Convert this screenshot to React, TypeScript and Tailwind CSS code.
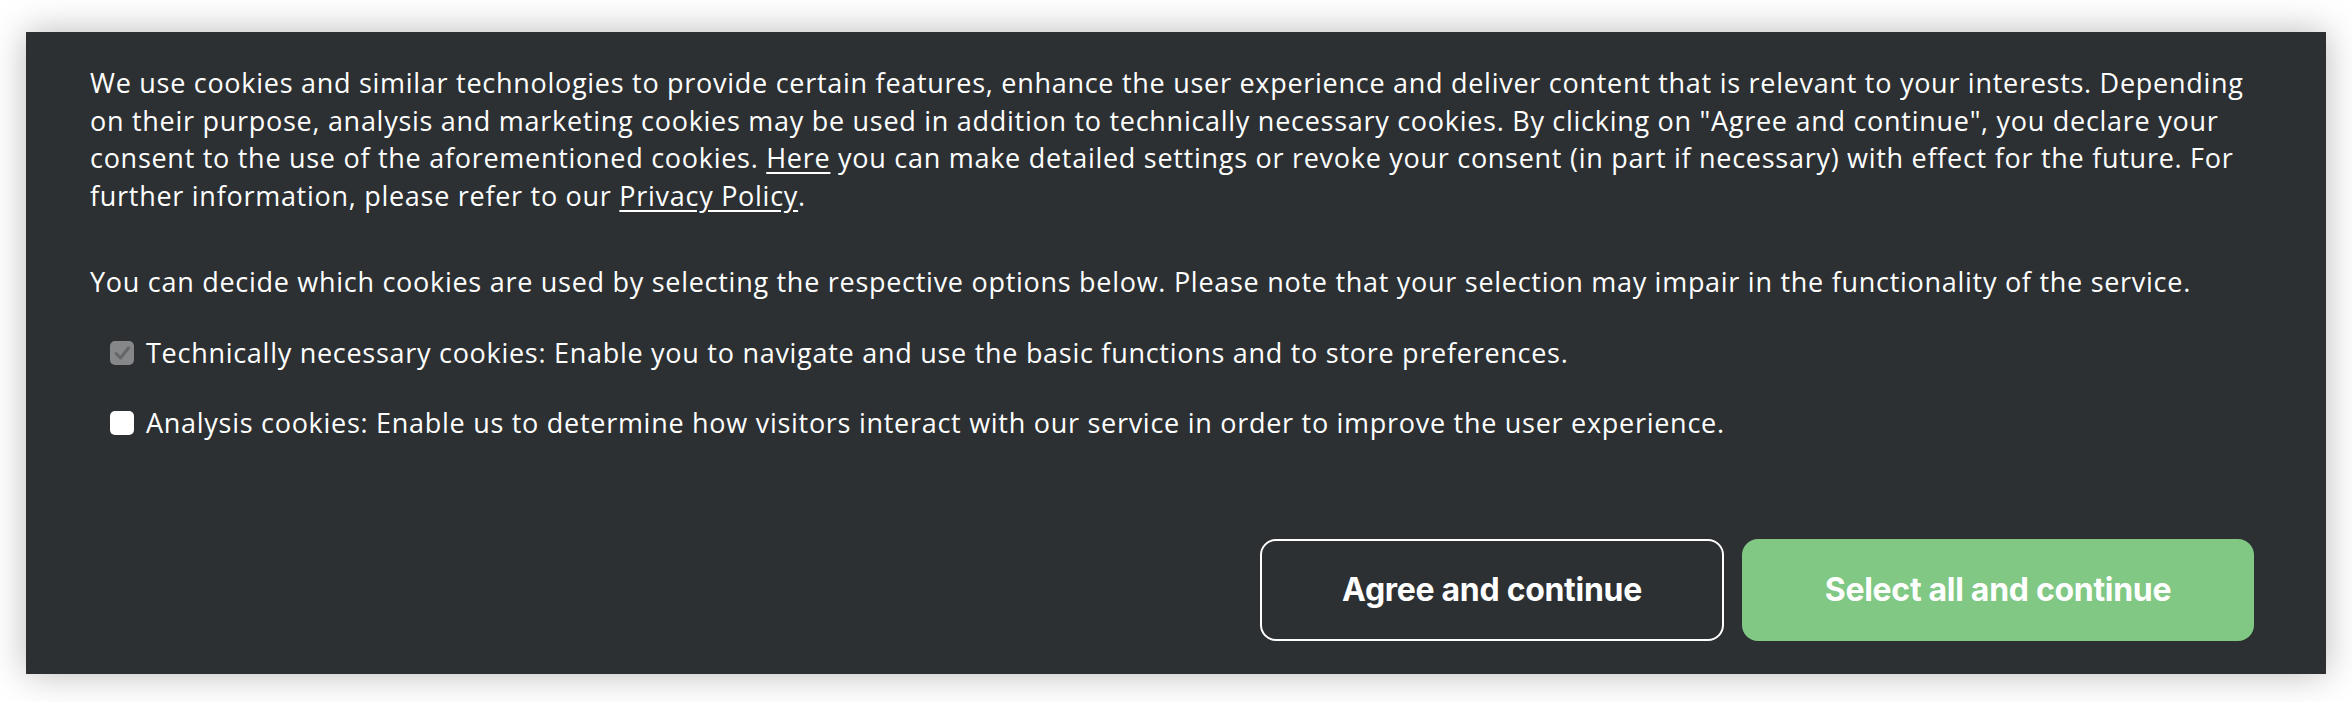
import React from 'react';

const App: React.FC = () => {
  return (
    <div className="h-[702px] w-[2352px] bg-white px-[26px] pt-[32px] pb-[28px]">
      <div
        className="flex h-[642px] flex-col bg-[#2c3033] pl-[64px] pr-[72px] pt-[32px] pb-[33px] text-white shadow-[0_0_34px_rgba(0,0,0,0.28)]"
        style={{ fontFamily: '"Open Sans", "Noto Sans", sans-serif' }}
      >
        {/* Intro text */}
        <p className="text-[27px] leading-[37.5px] tracking-[0.72px]">
          We use cookies and similar technologies to provide certain features, enhance the user experience and deliver content that is relevant to your interests. Depending on their purpose, analysis and marketing cookies may be used in addition to technically necessary cookies. By clicking on "Agree and continue", you declare your consent to the use of the aforementioned cookies.{' '}
          <a className="underline underline-offset-4">Here</a> you can make detailed settings or revoke your consent (in part if necessary) with effect for the future. For further information, please refer to our{' '}
          <a className="underline underline-offset-4">Privacy Policy</a>.
        </p>
        <p className="mt-[49px] text-[27px] leading-[37.5px] tracking-[0.72px]">
          You can decide which cookies are used by selecting the respective options below. Please note that your selection may impair in the functionality of the service.
        </p>

        {/* Options */}
        <div className="mt-[32px] flex flex-col gap-[30px] pl-[20px]">
          <label className="flex items-center gap-[12px] text-[27px] leading-[40px] tracking-[0.72px]">
            <span className="flex h-[24px] w-[24px] shrink-0 items-center justify-center rounded-[5px] bg-[#858789]">
              <svg viewBox="0 0 24 24" className="h-[24px] w-[24px]" fill="none" stroke="#646668" strokeWidth="3" strokeLinecap="round" strokeLinejoin="round">
                <path d="M6 12.5l4.5 4.5 8-10" />
              </svg>
            </span>
            Technically necessary cookies: Enable you to navigate and use the basic functions and to store preferences.
          </label>
          <label className="flex items-center gap-[12px] text-[27px] leading-[40px] tracking-[0.72px]">
            <span className="h-[24px] w-[24px] shrink-0 rounded-[5px] bg-white" />
            Analysis cookies: Enable us to determine how visitors interact with our service in order to improve the user experience.
          </label>
        </div>

        {/* Actions */}
        <div className="mt-auto flex justify-end gap-[18px]" style={{ fontFamily: 'Inter, sans-serif' }}>
          <button className="flex h-[102px] w-[464px] items-center justify-center rounded-[16px] border-2 border-white text-[32px] font-bold tracking-[-0.3px]">
            Agree and continue
          </button>
          <button className="flex h-[102px] w-[512px] items-center justify-center rounded-[16px] bg-[#80c884] text-[32px] font-bold tracking-[-0.3px]">
            Select all and continue
          </button>
        </div>
      </div>
    </div>
  );
};

export default App;
